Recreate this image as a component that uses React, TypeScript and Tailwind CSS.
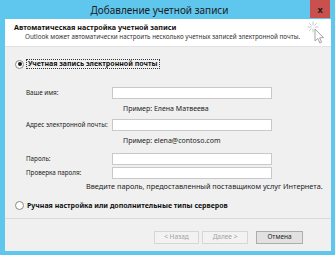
import React from "react";

const font = { fontFamily: '"Noto Sans", "Liberation Sans", Arial, sans-serif' };

function Radio({ checked }: { checked?: boolean }) {
  return (
    <span className="flex h-[9px] w-[9px] shrink-0 items-center justify-center rounded-full border border-[#8a8a8a] bg-white">
      {checked && <span className="h-[4px] w-[4px] rounded-full bg-[#1a1a1a]" />}
    </span>
  );
}

function Field({ label, mt }: { label: string; mt: string }) {
  return (
    <div className={`flex h-[12px] items-center ${mt}`}>
      <span className="w-[107px] shrink-0 pl-[21px] text-[6.3px] leading-none text-[#222] whitespace-nowrap">
        {label}
      </span>
      <div className="h-full w-[160px] border border-[#c9c9c9] bg-white" />
    </div>
  );
}

function Hint({ text, mt }: { text: string; mt: string }) {
  return (
    <div className={`flex h-[8px] items-center ${mt} pl-[118px] text-[7px] leading-none text-[#222] whitespace-nowrap`}>
      {text}
    </div>
  );
}

function CursorIcon() {
  return (
    <svg width="20" height="24" viewBox="0 0 20 24">
      <g stroke="#b8b8b8" strokeWidth="0.8" strokeLinecap="round">
        <line x1="6" y1="1" x2="6" y2="4" />
        <line x1="6" y1="8" x2="6" y2="11" />
        <line x1="1" y1="6" x2="4" y2="6" />
        <line x1="8" y1="6" x2="11" y2="6" />
        <line x1="2.5" y1="2.5" x2="4.3" y2="4.3" />
        <line x1="9.5" y1="2.5" x2="7.7" y2="4.3" />
        <line x1="2.5" y1="9.5" x2="4.3" y2="7.7" />
      </g>
      <path
        d="M8 8 L8 20 L10.8 17.4 L12.8 22 L14.6 21.2 L12.6 16.8 L16.4 16.6 Z"
        fill="#fff"
        stroke="#9a9a9a"
        strokeWidth="0.9"
        strokeLinejoin="round"
      />
    </svg>
  );
}

export default function App() {
  return (
    <div className="flex h-[255px] w-[335px] flex-col overflow-hidden bg-[#5fc6ee]" style={font}>
      <div className="relative flex h-[19px] shrink-0 items-center justify-center pr-[16px]">
        <span className="text-[10px] leading-none text-[#1c1c1c]">Добавление учетной записи</span>
        <div className="absolute right-[5px] top-0 flex h-[18px] w-[20px] items-center justify-center bg-[#c9504d]">
          <span className="text-[9px] font-bold leading-none text-[#1e1e1e]">x</span>
        </div>
      </div>
      <div className="ml-[5px] mr-[4px] flex h-[232px] flex-col bg-[#f0f0f0]">
        <div className="flex h-[28px] shrink-0 items-start justify-between border-b border-[#e2e2e2] bg-white">
          <div className="flex flex-col pl-[9px] pt-[4px]">
            <span className="text-[7.2px] font-bold leading-[9px] text-[#111] whitespace-nowrap">
              Автоматическая настройка учетной записи
            </span>
            <span className="pl-[11px] text-[6.3px] leading-[9px] text-[#333] whitespace-nowrap">
              Outlook может автоматически настроить несколько учетных записей электронной почты.
            </span>
          </div>
          <div className="pr-[4px] pt-[2px]">
            <CursorIcon />
          </div>
        </div>

        <div className="mt-[12px] flex h-[10px] items-center pl-[10px]">
          <Radio checked />
          <span className="ml-[2px] border border-dotted border-[#333] px-[1px] text-[7px] font-bold leading-[8px] text-[#111] whitespace-nowrap">
            Учетная запись электронной почты
          </span>
        </div>

        <Field label="Ваше имя:" mt="mt-[18px]" />
        <Hint text="Пример: Елена Матвеева" mt="mt-[5px]" />
        <Field label="Адрес электронной почты:" mt="mt-[7px]" />
        <Hint text="Пример: elena@contoso.com" mt="mt-[5px]" />
        <Field label="Пароль:" mt="mt-[9px]" />
        <Field label="Проверка пароля:" mt="mt-[2px]" />
        <div className="mt-[4px] flex h-[8px] items-center pl-[81px] text-[7.3px] leading-none text-[#222] whitespace-nowrap">
          Введите пароль, предоставленный поставщиком услуг Интернета.
        </div>

        <div className="mt-[9px] flex h-[10px] items-center pl-[10px]">
          <Radio />
          <span className="ml-[3px] text-[7px] font-bold leading-none text-[#111] whitespace-nowrap">
            Ручная настройка или дополнительные типы серверов
          </span>
        </div>

        <div className="mt-[8px] h-px bg-[#d9d9d9]" />

        <div className="mt-[12px] flex h-[13px] pl-[149px]">
          <div className="flex w-[45px] items-center justify-center border border-[#d6d6d6] bg-[#f2f2f2] text-[6.5px] leading-none text-[#a2a2a2]">
            &lt; Назад
          </div>
          <div className="ml-[3px] flex w-[46px] items-center justify-center border border-[#d6d6d6] bg-[#f2f2f2] text-[6.5px] leading-none text-[#a2a2a2]">
            Далее &gt;
          </div>
          <div className="ml-[8px] flex w-[47px] items-center justify-center border border-[#adadad] bg-[#e1e1e1] text-[6.5px] leading-none text-[#222]">
            Отмена
          </div>
        </div>
      </div>
    </div>
  );
}
